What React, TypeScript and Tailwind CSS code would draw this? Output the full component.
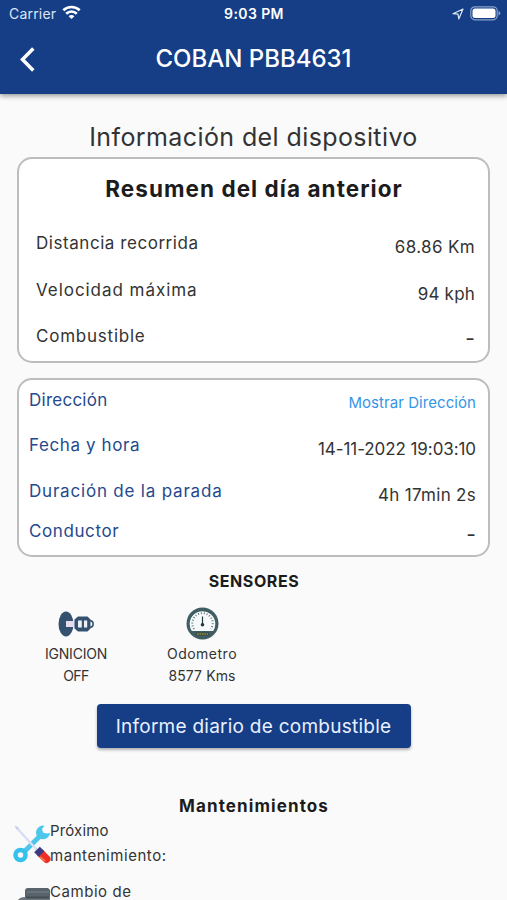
const summary = [
  { label: 'Distancia recorrida', value: '68.86 Km', labelClass: 'tracking-[0.55px]', valueClass: 'tracking-[0.35px]' },
  { label: 'Velocidad máxima', value: '94 kph', labelClass: 'tracking-[0.95px]', valueClass: 'tracking-[0.2px]' },
  { label: 'Combustible', value: '-', labelClass: 'tracking-[0.77px]', valueClass: 'text-[21px] -mt-[2px]' },
]

const details = [
  { label: 'Fecha y hora', value: '14-11-2022 19:03:10', row: 'h-[46px] leading-[48px]', labelClass: 'tracking-[0.6px]', valueClass: 'tracking-[-0.08px]' },
  { label: 'Duración de la parada', value: '4h 17min 2s', row: 'h-[47px] leading-[48px]', labelClass: 'tracking-[0.8px]', valueClass: 'tracking-[0.3px]' },
  { label: 'Conductor', value: '-', row: 'h-[40px] leading-[34px]', labelClass: 'tracking-[0.6px]', valueClass: 'text-[21px]' },
]

function WifiIcon() {
  return (
    <svg width="19" height="15" viewBox="0 0 19 15" fill="none" stroke="white" strokeWidth="2.6" className="-mt-[2px]">
      <path d="M1.3 5.3C5.9.8 13.1.8 17.7 5.3" />
      <path d="M4.2 8.7c3-2.9 7.6-2.9 10.6 0" />
      <path d="M6.6 11.2c1.6-1.5 4.2-1.5 5.8 0L9.5 14z" fill="white" stroke="none" />
    </svg>
  )
}

function IgnitionIcon() {
  return (
    <svg width="36" height="26" viewBox="0 0 36 26">
      <ellipse cx="8" cy="13" rx="7.5" ry="12.5" fill="#34526f" />
      <path d="M8 10h9v6H8z" fill="#e6dced" />
      <path d="M20 5.500h9.500l3 3v9l-3 3H20l-3.500-3v-9z" fill="#34526f" />
      <path d="M20 9.500h3.800v7H20zM26 9.500h3.200v7H26z" fill="#eef0f8" />
      <path d="M32 9.500q3.200.5 3.200 3.500T32 16.500" fill="none" stroke="#34526f" strokeWidth="1.500" />
    </svg>
  )
}

function OdometerIcon() {
  return (
    <svg width="33" height="33" viewBox="0 0 33 33">
      <circle cx="16.5" cy="16.5" r="16" fill="#3f5d63" />
      <path d="M5.8 24a12.800 12.800 0 1 1 21.400 0z" fill="#f7fafb" />
      <path
        d="M8 22a10.200 10.200 0 1 1 17 0"
        fill="none"
        stroke="#5b6f75"
        strokeWidth="2"
        strokeDasharray="0.9 2"
      />
      <path d="M16.5 9.500v8" stroke="#26383e" strokeWidth="1.2" />
      <circle cx="16.5" cy="17.800" r="1.800" fill="#26383e" />
      <path d="M10 25.500h13v3H10z" fill="#394b45" />
      <path d="M11 27h11" stroke="#9b8c3c" strokeWidth="1.500" strokeDasharray="1.7 0.8" />
    </svg>
  )
}

function ToolsIcon() {
  return (
    <svg width="38" height="40" viewBox="0 0 38 40">
      <path d="M11 28 27 12" stroke="#4cc6ea" strokeWidth="5" />
      <circle cx="7.500" cy="31" r="5" fill="none" stroke="#35c1ec" strokeWidth="4.500" />
      <path
        d="M37 9a7 7 0 0 1-10.500 5.300L24 12a7 7 0 0 1 7.500-10.300L29 5l1 3.500 3.500 1z"
        fill="#4cc6ea"
      />
      <path d="m3 3 21 23" stroke="#d7ddf5" strokeWidth="2.500" />
      <path d="m1.500 1.500 4 2-1.500 2.500z" fill="#c5cdee" />
      <path d="m28 29.500 5.500 5.500" stroke="#ef2e25" strokeWidth="8" strokeLinecap="round" />
      <path d="m24 25.500 4.500 4.500" stroke="#3b3b83" strokeWidth="8" />
      <path d="m27 33 5 4" stroke="#ff7043" strokeWidth="2" />
    </svg>
  )
}

function PartIcon() {
  return (
    <svg width="38" height="30" viewBox="0 0 38 30">
      <path d="M12 3q0-3 3-3h20l2 2v10H12z" fill="#59636b" />
      <path d="M5 12q2-3 7-3h25v15H5z" fill="#6d767c" />
      <path d="M14 4h22" stroke="#69747c" strokeWidth="2" />
      <path d="M13 9.500h23" stroke="#424c54" strokeWidth="2" />
    </svg>
  )
}

export default function App() {
  return (
    <div className="h-[900px] w-full overflow-hidden bg-[#fafafa] font-['Inter',sans-serif] text-[#333]">
      <header className="relative h-[94px] bg-[#153e87] text-white shadow-[0_2px_5px_rgba(0,0,0,0.4)]">
        {/* Status bar */}
        <div className="grid h-[27px] grid-cols-3 items-center px-[9px]">
          <div className="flex items-center gap-[6px]">
            <span className="text-[14px] tracking-[0.2px] text-[#dce6f5]">Carrier</span>
            <WifiIcon />
          </div>
          <span className="pl-[1px] text-center text-[14px] font-semibold tracking-[0.4px]">9:03 PM</span>
          <div className="-mr-[3px] flex items-center justify-end gap-[6px]">
            <svg width="12" height="12" viewBox="0 0 12 12" fill="none" stroke="#dce6f5" strokeWidth="1.2">
              <path d="M1 5.700 11 1 6.800 11 6 6.200z" strokeLinejoin="round" />
            </svg>
            <svg width="31" height="15" viewBox="0 0 31 15">
              <rect x="0.8" y="0.8" width="26.4" height="13" rx="4" fill="none" stroke="#8aa0c8" strokeWidth="1.2" />
              <rect x="2.5" y="2.5" width="23" height="9.6" rx="2.5" fill="white" />
              <path d="M28.500 5q1.800.6 1.800 2.300t-1.800 2.300z" fill="#8aa0c8" />
            </svg>
          </div>
        </div>
        {/* Title */}
        <div className="grid h-[62px] grid-cols-[60px_1fr_60px] items-center">
          <button className="pl-[20px]" aria-label="Volver">
            <svg width="15" height="25" viewBox="0 0 15 25" fill="none" stroke="white" strokeWidth="3.5" className="mt-[2px]">
              <path d="M13.300 1.500 2.500 12.500l10.800 11" />
            </svg>
          </button>
          <h1 className="pt-[2px] text-center text-[24px] font-medium">COBAN PBB4631</h1>
        </div>
      </header>

      <main>
        <h2 className="mt-[25px] h-[38px] text-center text-[25px] leading-[37px] tracking-[0.4px]">
          Información del dispositivo
        </h2>

        <section className="mx-[17px] h-[206px] rounded-[15px] border-2 border-[#bdbdbd] bg-white pr-[13px] pl-[17px]">
          <h3 className="mt-[13px] h-[48px] pr-[3px] text-center text-[22.5px] leading-[34px] font-bold tracking-[1.05px] text-[#1c1c1c]">
            Resumen del día anterior
          </h3>
          {summary.map((item) => (
            <div key={item.label} className="flex h-[46.5px] justify-between text-[17px] leading-[47px]">
              <span className={item.labelClass}>{item.label}</span>
              <span className={`pt-[4px] ${item.valueClass}`}>{item.value}</span>
            </div>
          ))}
        </section>

        <section className="mx-[17px] mt-[15px] h-[179px] rounded-[15px] border-2 border-[#bdbdbd] bg-white pr-[12px] pl-[10px] text-[17px]">
          <div className="flex h-[41px] justify-between leading-[40px]">
            <span className="tracking-[0.25px] text-[#26498d]">Dirección</span>
            <a className="pt-[3px] text-[15px] tracking-[0.06px] text-[#3595e6]">Mostrar Dirección</a>
          </div>
          {details.map((item) => (
            <div key={item.label} className={`flex justify-between ${item.row}`}>
              <span className={`text-[#26498d] ${item.labelClass}`}>{item.label}</span>
              <span className={`pt-[4px] ${item.valueClass}`}>{item.value}</span>
            </div>
          ))}
        </section>

        <h3 className="mt-[11px] h-[27px] pl-[1px] text-center text-[16px] leading-[26px] font-bold tracking-[0.6px] text-[#1c1c1c]">
          SENSORES
        </h3>

        <div className="flex pt-[12px] text-[14px] leading-[22px]">
          <div className="ml-[13px] flex w-[126px] flex-col items-center">
            <div className="flex h-[36px] items-center pb-[3px]">
              <IgnitionIcon />
            </div>
            <span className="tracking-[-0.2px]">IGNICION</span>
            <span className="tracking-[-0.5px]">OFF</span>
          </div>
          <div className="flex w-[126px] flex-col items-center">
            <div className="flex h-[36px] items-center pb-[3px]">
              <OdometerIcon />
            </div>
            <span className="tracking-[0.5px]">Odometro</span>
            <span className="tracking-[0.1px]">8577 Kms</span>
          </div>
        </div>

        <button className="mx-auto mt-[17px] block h-[44px] w-[314px] rounded-[4px] bg-[#153e87] pt-[2px] text-[19px] tracking-[0.25px] text-[#e8f0ff] shadow-[0_2px_3px_rgba(0,0,0,0.3)]">
          Informe diario de combustible
        </button>

        <h3 className="mt-[45px] h-[26px] pl-[1px] text-center text-[17px] leading-[26px] font-bold tracking-[1.1px] text-[#1c1c1c]">
          Mantenimientos
        </h3>

        <ul className="pl-[13px] text-[15px] leading-[24.5px]">
          <li className="flex h-[61px]">
            <div className="w-[37px] shrink-0 pt-[5px]">
              <ToolsIcon />
            </div>
            <p className="w-[130px]">
              <span className="tracking-[0.15px]">Próximo</span> <span className="tracking-[0.55px]">mantenimiento:</span>
            </p>
          </li>
          <li className="flex">
            <div className="w-[37px] shrink-0 pt-[8px]">
              <PartIcon />
            </div>
            <p className="tracking-[0.55px]">Cambio de</p>
          </li>
        </ul>
      </main>
    </div>
  )
}
